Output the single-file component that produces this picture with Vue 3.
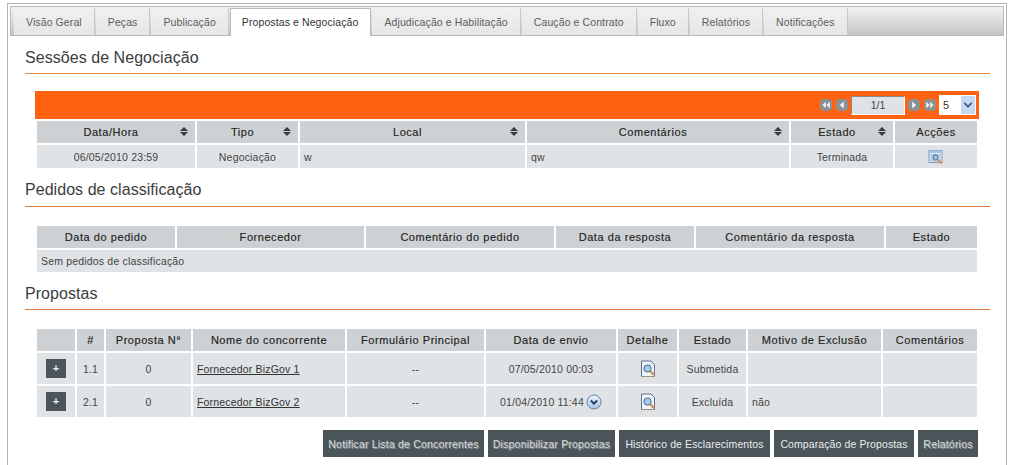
<script setup>
const sessionCols = [158, 101, 225, 262, 102, 82]
const sessionHeads = ['Data/Hora', 'Tipo', 'Local', 'Comentários', 'Estado', 'Acções']
const requestCols = [138, 187, 188, 138, 188, 91]
const requestHeads = ['Data do pedido', 'Fornecedor', 'Comentário do pedido', 'Data da resposta', 'Comentário da resposta', 'Estado']
const proposalCols = [38, 27, 85, 152, 137, 130, 59, 67, 133, 94]
const proposalHeads = ['', '#', 'Proposta N°', 'Nome do concorrente', 'Formulário Principal', 'Data de envio', 'Detalhe', 'Estado', 'Motivo de Exclusão', 'Comentários']
const proposals = [
  { id: '1.1', name: 'Fornecedor BizGov 1', date: '07/05/2010 00:03', state: 'Submetida', reason: '', more: false },
  { id: '2.1', name: 'Fornecedor BizGov 2', date: '01/04/2010 11:44', state: 'Excluída', reason: 'não', more: true },
]
const tabs = ['Visão Geral', 'Peças', 'Publicação', 'Propostas e Negociação', 'Adjudicação e Habilitação', 'Caução e Contrato', 'Fluxo', 'Relatórios', 'Notificações']
const actions = [
  { label: 'Notificar Lista de Concorrentes', ghost: true, width: 161 },
  { label: 'Disponibilizar Propostas', ghost: true, width: 127 },
  { label: 'Histórico de Esclarecimentos', ghost: false, width: 151 },
  { label: 'Comparação de Propostas', ghost: false, width: 140 },
  { label: 'Relatórios', ghost: true, width: 60 },
]
</script>

<template>
  <div class="frame">
    <nav class="tabs">
      <div v-for="tab in tabs" :key="tab" class="tab" :class="{ active: tab === 'Propostas e Negociação' }">{{ tab }}</div>
    </nav>

    <section class="section">
      <h2 class="h-first">Sessões de Negociação</h2>
      <div class="pager">
        <span class="pbtn"><svg viewBox="0 0 12 12"><path d="M5.800 2.800 2.400 6l3.400 3.200zM9.800 2.800 6.400 6l3.400 3.200z" /></svg></span>
        <span class="pbtn"><svg viewBox="0 0 12 12"><path d="M7.800 2.500 3.800 6l4 3.500z" /></svg></span>
        <span class="pinput">1/1</span>
        <span class="pbtn"><svg viewBox="0 0 12 12"><path d="M4.200 2.500 8.200 6l-4 3.500z" /></svg></span>
        <span class="pbtn"><svg viewBox="0 0 12 12"><path d="M2.200 2.800 5.600 6 2.200 9.200zM6.200 2.800 9.600 6 6.200 9.200z" /></svg></span>
        <span class="pselect">
          <span class="pvalue">5</span>
          <span class="parrow"><svg viewBox="0 0 13 17"><path d="M3 6.500 6.500 10 10 6.500" /></svg></span>
        </span>
      </div>
      <table>
        <colgroup><col v-for="(w, i) in sessionCols" :key="i" :style="{ width: w + 'px' }" /></colgroup>
        <thead>
          <tr>
            <th v-for="(h, i) in sessionHeads" :key="h" :class="{ sortable: i < 5 }">
              <span>{{ h }}</span>
              <span v-if="i < 5" class="sort"><i class="up"></i><i class="down"></i></span>
            </th>
          </tr>
        </thead>
        <tbody>
          <tr class="r23">
            <td class="c">06/05/2010 23:59</td>
            <td class="c">Negociação</td>
            <td>w</td>
            <td>qw</td>
            <td class="c">Terminada</td>
            <td class="c">
              <svg class="ico small" viewBox="0 0 16 16">
                <rect x="1" y="1.500" width="13" height="12" fill="#e8eef6" stroke="#7f97c2" />
                <path d="M1 1.500h13v2.500H1z" fill="#a8c0e4" />
                <rect x="3" y="5.500" width="9" height="6.500" fill="#cfdcec" stroke="#8ea2bd" stroke-width=".6" />
                <circle cx="7.500" cy="8.500" r="2.600" fill="#9cc4e4" stroke="#3f6a96" />
                <path d="M10 11l4 3.500" stroke="#dd8a50" stroke-width="2" />
              </svg>
            </td>
          </tr>
        </tbody>
      </table>
    </section>

    <section class="section">
      <h2 class="h-second">Pedidos de classificação</h2>
      <table class="spaced">
        <colgroup><col v-for="(w, i) in requestCols" :key="i" :style="{ width: w + 'px' }" /></colgroup>
        <thead><tr><th v-for="h in requestHeads" :key="h">{{ h }}</th></tr></thead>
        <tbody><tr class="r22"><td colspan="6">Sem pedidos de classificação</td></tr></tbody>
      </table>
    </section>

    <section class="section">
      <h2 class="h-third">Propostas</h2>
      <table class="spaced">
        <colgroup><col v-for="(w, i) in proposalCols" :key="i" :style="{ width: w + 'px' }" /></colgroup>
        <thead><tr><th v-for="(h, i) in proposalHeads" :key="i">{{ h }}</th></tr></thead>
        <tbody>
          <tr v-for="p in proposals" :key="p.id" class="r31">
            <td class="c"><span class="plus">+</span></td>
            <td class="c">{{ p.id }}</td>
            <td class="c">0</td>
            <td><a class="link">{{ p.name }}</a></td>
            <td class="c">--</td>
            <td class="c">
              <span class="datecell">{{ p.date }}
                <svg v-if="p.more" class="more" viewBox="0 0 16 16">
                  <defs>
                    <linearGradient id="moreFill" x1="0" y1="0" x2="0" y2="1">
                      <stop offset="0" stop-color="#eef4fb" />
                      <stop offset="1" stop-color="#a9c3e2" />
                    </linearGradient>
                  </defs>
                  <circle cx="8" cy="8" r="7" fill="url(#moreFill)" stroke="#64829f" />
                  <path d="M4.800 6.500 8 9.700l3.200-3.200" fill="none" stroke="#1f3d6a" stroke-width="1.800" />
                </svg>
              </span>
            </td>
            <td class="c">
              <svg class="ico" viewBox="0 0 16 18">
                <path d="M1.500 1h9.500l3.500 3.500v12h-13z" fill="#f0f4f9" stroke="#5c6f96" />
                <path d="M1.500 16.500h13" stroke="#9a8f80" />
                <circle cx="7.500" cy="8.500" r="3.600" fill="#a6cbe6" stroke="#3d6b98" />
                <path d="M10.300 11.300l3.700 3.700" stroke="#d29258" stroke-width="2.400" />
              </svg>
            </td>
            <td class="c">{{ p.state }}</td>
            <td>{{ p.reason }}</td>
            <td></td>
          </tr>
        </tbody>
      </table>
      <div class="actions">
        <button v-for="a in actions" :key="a.label" type="button" class="action" :class="{ ghost: a.ghost }" :style="{ width: a.width + 'px' }">{{ a.label }}</button>
      </div>
    </section>
  </div>
</template>

<style>
html, body { margin: 0; background: #fff; overflow: hidden; }
</style>

<style scoped>
.frame {
  box-sizing: border-box;
  width: 1000px;
  height: 462px;
  margin: 3px 0 0 7px;
  padding: 2px 2px 0;
  border: 1px solid #b4b4b4;
  border-bottom: 0;
  font-family: "Liberation Sans", Arial, sans-serif;
  color: #3a3a3a;
}
.tabs {
  display: flex;
  align-items: flex-end;
  gap: 1px;
  height: 30px;
  box-sizing: border-box;
  padding-left: 3px;
  border: 1px solid #b9b9b9;
  background: linear-gradient(#f2f2f2, #c4c6c6);
}
.tab {
  box-sizing: border-box;
  height: 27px;
  padding: 0 12px;
  display: flex;
  align-items: center;
  font-size: 10.500px;
  letter-spacing: 0.1px;
  color: #5d5d5d;
  background: linear-gradient(#f0f0f0, #e6e6e6);
  border-right: 1px solid #c8c8c8;
}
.tab.active {
  height: 28px;
  margin-bottom: -1px;
  padding: 0 12px 1px 11px;
  background: #fff;
  color: #333;
  border: 1px solid #b9b9b9;
  border-bottom: 0;
}
.section { margin: 0 14px 0 15px; }
h2 {
  box-sizing: border-box;
  margin: 0;
  font-size: 16px;
  line-height: 20px;
  font-weight: 400;
  letter-spacing: 0.05px;
  color: #3c3c3c;
  border-bottom: 1px solid #e98a45;
}
.h-first { height: 38px; padding-top: 12px; }
.h-second { height: 37px; padding-top: 10px; border-bottom-color: #dd7a3c; }
.h-third { height: 36px; padding-top: 10px; border-bottom-color: #dd7a3c; }
.pager {
  box-sizing: border-box;
  width: 944px;
  height: 28px;
  margin: 17px 0 0 10px;
  padding-right: 3px;
  background: #ff6210;
  display: flex;
  align-items: center;
  justify-content: flex-end;
  gap: 4px;
}
.pbtn {
  width: 12px;
  height: 12px;
  border-radius: 4px;
  background: #8d9091;
  display: flex;
}
.pbtn svg { width: 100%; height: 100%; fill: #f4f4f4; }
.pinput {
  box-sizing: border-box;
  width: 54px;
  height: 19px;
  margin: 0 -1px;
  background: #dfe3e6;
  border: 1px solid #fff;
  border-top-color: #8a8a8a;
  border-left-color: #8a8a8a;
  font-size: 10.500px;
  line-height: 17px;
  text-align: center;
  color: #444;
}
.pselect {
  box-sizing: border-box;
  width: 37px;
  height: 20px;
  margin-left: -1px;
  background: #fff;
  display: flex;
  align-items: center;
  justify-content: space-between;
  padding: 1px;
}
.pvalue { font-size: 11px; padding-left: 3px; color: #333; }
.parrow {
  width: 14px;
  height: 18px;
  background: #c9d8f2;
  display: flex;
}
.parrow svg { width: 100%; height: 100%; fill: none; stroke: #40608f; stroke-width: 1.800; }
table {
  table-layout: fixed;
  border-collapse: separate;
  border-spacing: 2px;
  width: 944px;
  margin-left: 10px;
  font-size: 10.500px;
  letter-spacing: 0.18px;
}
table.spaced { margin-top: 17px; }
th {
  height: 22px;
  padding: 0;
  background: #cdd1d3;
  font-size: 11px;
  font-weight: 400;
  letter-spacing: 0.55px;
  color: #222;
  text-align: center;
  position: relative;
  -webkit-text-stroke: 0.15px #222;
}
th.sortable { padding-right: 10px; }
td {
  padding: 0 4px;
  background: #dfe3e6;
  color: #444;
}
td.c { text-align: center; }
.r23 td { height: 23px; }
.r22 td { height: 22px; }
.r31 td { height: 31px; }
.sort {
  position: absolute;
  right: 7px;
  top: 6px;
  display: flex;
  flex-direction: column;
  gap: 1px;
}
.sort i {
  width: 0;
  height: 0;
  border-left: 4px solid transparent;
  border-right: 4px solid transparent;
}
.sort .up { border-bottom: 4px solid #3a3a3a; }
.sort .down { border-top: 4px solid #3a3a3a; }
.ico { width: 16px; height: 18px; display: block; margin: 0 auto; }
.ico.small { width: 16px; height: 16px; }
.plus {
  display: inline-block;
  width: 20px;
  height: 19px;
  line-height: 19px;
  background: #4a5459;
  color: #eef1f2;
  font-size: 11px;
  font-weight: 700;
  text-align: center;
}
.link { color: #333; text-decoration: underline; }
.datecell { display: inline-flex; align-items: center; gap: 2px; }
.more { width: 16px; height: 16px; }
.actions {
  display: flex;
  justify-content: flex-end;
  gap: 4px;
  width: 942px;
  margin: 11px 0 0 11px;
}
.action {
  box-sizing: border-box;
  height: 27px;
  padding: 0;
  border: 0;
  background: #4a5459;
  color: #e9ecee;
  font-family: inherit;
  font-size: 10.500px;
  letter-spacing: 0.1px;
}
.action.ghost { color: #d6d9db; letter-spacing: 0.2px; text-shadow: 1px 1px 0 #8b9296; }
</style>
